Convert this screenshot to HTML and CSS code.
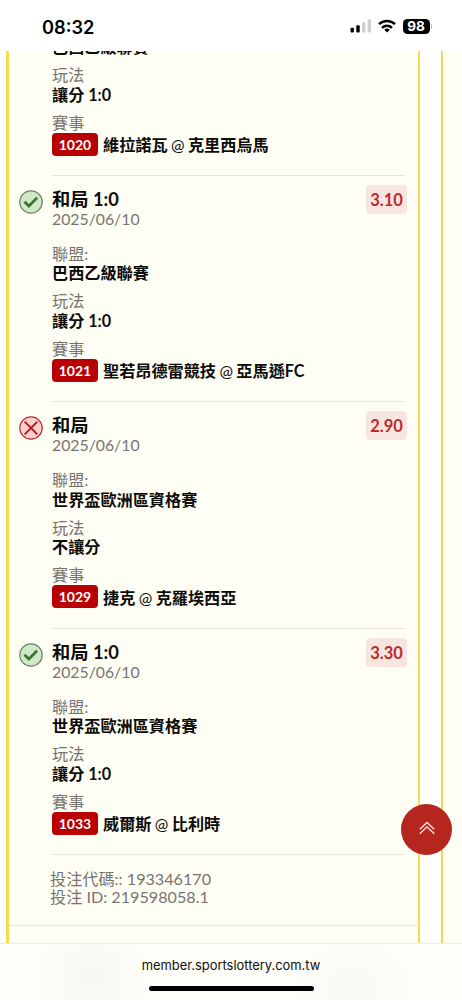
FILE: index.html
```
<!DOCTYPE html>
<html lang="zh-Hant">
<head>
<meta charset="utf-8">
<title>投注紀錄</title>
<link rel="stylesheet" href="styles.css">
</head>
<body>
<div class="screen">
  <header class="status">
    <span class="time">08:32</span>
    <div class="indicators">
      <svg class="signal" width="22" height="14" viewBox="0 0 22 14"><rect x="0.5" y="8.7" width="3.4" height="4.8" rx="1" fill="#000"/><rect x="6.3" y="6.3" width="3.4" height="7.2" rx="1" fill="#000"/><rect x="12" y="3.3" width="3.4" height="10.2" rx="1" fill="#cfcfcf"/><rect x="17.6" y="0.3" width="3.4" height="13.2" rx="1" fill="#cfcfcf"/></svg>
      <svg class="wifi" width="18" height="14" viewBox="0 0 18 14" fill="none" stroke="#000" stroke-width="2.5"><path d="M1 5.2a11.6 11.6 0 0 1 16 0"/><path d="M4 8.8a7.2 7.2 0 0 1 10 0"/><path d="M9 13.4L6.3 10.8a3.9 3.9 0 0 1 5.4 0z" fill="#000" stroke="none"/></svg>
      <span class="battery">98</span><span class="tip"></span>
    </div>
  </header>
  <main class="page">
    <section class="ticket">
      <article class="bet partial">
        <div class="body">
          <b class="value">巴西乙級聯賽</b>
          <span class="label">玩法</span><b class="value">讓分 1:0</b>
          <span class="label">賽事</span>
          <div class="match"><span class="code">1020</span><b>維拉諾瓦 <i>@</i> 克里西烏馬</b></div>
        </div>
      </article>
      <article class="bet">
        <svg class="result" width="24" height="24" viewBox="0 0 24 24"><circle cx="12" cy="12" r="11.2" fill="#cfe8c8" stroke="#66835f" stroke-width="1.2"/><path d="M5.5 11.7l4.4 4.3 8.2-8.2" fill="none" stroke="#38762c" stroke-width="2.7"/></svg>
        <div class="body">
          <h2>和局 1:0</h2><time>2025/06/10</time>
          <span class="label">聯盟:</span><b class="value">巴西乙級聯賽</b>
          <span class="label">玩法</span><b class="value">讓分 1:0</b>
          <span class="label">賽事</span>
          <div class="match"><span class="code">1021</span><b>聖若昂德雷競技 <i>@</i> 亞馬遜FC</b></div>
        </div>
        <span class="odds">3.10</span>
      </article>
      <article class="bet">
        <svg class="result" width="24" height="24" viewBox="0 0 24 24"><circle cx="12" cy="12" r="11.2" fill="#f9cfcb" stroke="#b52a31" stroke-width="1.2"/><path d="M5.7 5.7l12.6 12.6M18.3 5.7L5.7 18.3" fill="none" stroke="#b3121d" stroke-width="1.8"/></svg>
        <div class="body">
          <h2>和局</h2><time>2025/06/10</time>
          <span class="label">聯盟:</span><b class="value">世界盃歐洲區資格賽</b>
          <span class="label">玩法</span><b class="value">不讓分</b>
          <span class="label">賽事</span>
          <div class="match"><span class="code">1029</span><b>捷克 <i>@</i> 克羅埃西亞</b></div>
        </div>
        <span class="odds">2.90</span>
      </article>
      <article class="bet">
        <svg class="result" width="24" height="24" viewBox="0 0 24 24"><circle cx="12" cy="12" r="11.2" fill="#cfe8c8" stroke="#66835f" stroke-width="1.2"/><path d="M5.5 11.7l4.4 4.3 8.2-8.2" fill="none" stroke="#38762c" stroke-width="2.7"/></svg>
        <div class="body">
          <h2>和局 1:0</h2><time>2025/06/10</time>
          <span class="label">聯盟:</span><b class="value">世界盃歐洲區資格賽</b>
          <span class="label">玩法</span><b class="value">讓分 1:0</b>
          <span class="label">賽事</span>
          <div class="match"><span class="code">1033</span><b>威爾斯 <i>@</i> 比利時</b></div>
        </div>
        <span class="odds">3.30</span>
      </article>
      <footer class="ids"><span>投注代碼:: 193346170</span><span>投注 ID: 219598058.1</span></footer>
    </section>
    <aside class="next"></aside>
  </main>
  <button class="to-top" aria-label="回到頂端"><svg width="16" height="14" viewBox="0 0 16 14" fill="none" stroke="#ffe9e4" stroke-width="1.3"><path d="M.8 8.3L8 1.5l7.2 6.8M.8 12.7L8 5.9l7.2 6.8"/></svg></button>
  <nav class="browser"><span>member.sportslottery.com.tw</span><div class="home"></div></nav>
</div>
</body>
</html>
```

FILE: styles.css
```
* { box-sizing: border-box; }
body { margin: 0; background: #fff; color: #0c0c08; font: 16.15px Lato, "Noto Sans CJK TC", sans-serif; }
.screen { position: relative; display: flex; flex-direction: column; width: 462px; height: 1000px; overflow: hidden; }
.status { flex: none; height: 51px; display: flex; justify-content: space-between; padding: 16.5px 30px 0 42px; background: #fff; }
.time { font: 600 18.2px/20px Inter, sans-serif; color: #000; }
.indicators { display: flex; align-items: center; height: 19px; }
.wifi { margin-left: 6px; }
.battery { width: 27px; height: 15px; margin-left: 7px; border-radius: 4.5px; background: #000; color: #fff; font: 700 13.6px/15px Inter, sans-serif; text-align: center; }
.tip { width: 1.5px; height: 5px; margin-left: 1px; border-radius: 0 2px 2px 0; background: #bbb; }
.page { flex: 1; min-height: 0; display: flex; justify-content: space-between; overflow: hidden; }
.ticket { width: 414px; height: 893px; margin-left: 6px; overflow: hidden; background: #fffef5; border: solid #fbd94c; border-width: 0 2px 0 3px; }
.next { width: 21px; background: #fffef5; border-left: 2px solid #f0d75e; }
.bet { display: flex; height: 226.4px; margin: 0 13px 0 10px; padding-top: 12px; }
.bet.partial { height: 124.8px; padding: 0 0 0 33px; }
.bet.partial .value:first-child { margin-top: -13.7px; }
.result { flex: none; margin: 2px 9px 0 0; }
.body { flex: 1; display: flex; flex-direction: column; align-items: stretch; border-bottom: 1px solid #e8e5de; white-space: nowrap; }
h2 { margin: 0; font-size: 18.3px; line-height: 22px; font-weight: 700; }
time { margin-bottom: 17.4px; font-size: 15.8px; line-height: 17.6px; color: #77746f; }
.label { flex: none; line-height: 18.5px; color: #77746f; }
.value { flex: none; margin-bottom: 9px; line-height: 20px; }
.match { display: flex; align-items: center; gap: 5px; height: 23px; margin-top: .6px; }
.match b { word-spacing: -.5px; }
.match i { font-style: normal; font-weight: 400; }
.code { width: 46px; height: 23px; border-radius: 4px; background: #b90002; color: #fff; font-size: 14px; line-height: 23px; font-weight: 700; text-align: center; }
.odds { flex: none; width: 41px; height: 29px; margin: -3px -2px 0 -39px; border-radius: 4px; background: #f7e6df; color: #bb2b2a; font-weight: 700; font-size: 16.5px; line-height: 30px; text-align: center; }
.ids { display: flex; flex-direction: column; height: 71px; padding: 15.5px 0 0 41px; border-bottom: 1px solid #e8e5de; color: #77746f; line-height: 17.5px; }
.to-top { position: absolute; left: 401px; top: 804px; width: 51px; height: 51px; padding: 0; border: 0; border-radius: 50%; background: #b5271e; display: grid; place-items: center; }
.to-top svg { margin-top: -4px; }
.browser { flex: none; display: flex; flex-direction: column; align-items: center; height: 57px; padding-top: 14px; border-top: 1px solid #eeece6; background: radial-gradient(ellipse 55px 55px at 92px 32px, #f7f6f1, transparent), radial-gradient(ellipse 60px 50px at 353px 45px, #faf8f2, transparent), #fffdf7; color: #111; font: 12.9px/16px Inter, sans-serif; }
.home { width: 165px; height: 5px; margin-top: 12px; border-radius: 3px; background: #000; }
```
